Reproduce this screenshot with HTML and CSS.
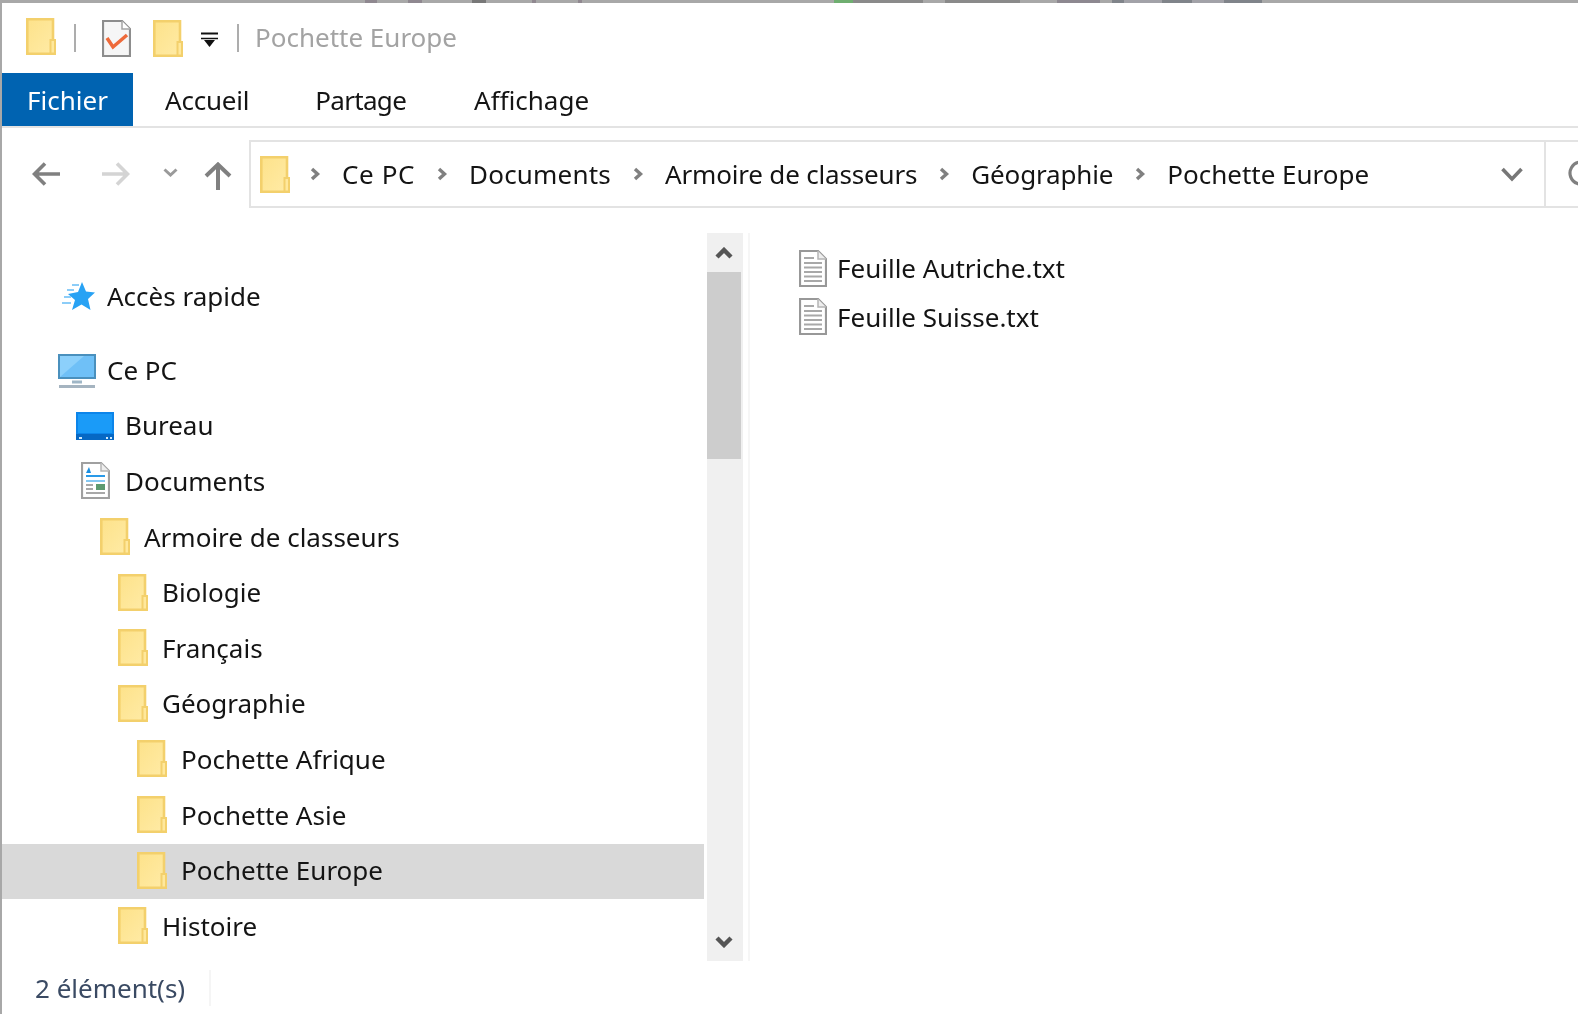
FILE: index.html
```html
<!DOCTYPE html>
<html lang="fr">
<head>
    <meta charset="UTF-8">
    <meta name="viewport" content="width=device-width, initial-scale=1.0">
    <title>Pochette Europe</title>
    <link rel="stylesheet" href="styles.css">
</head>
<body>
    <!-- icones reutilisees -->
    <svg class="defs" width="0" height="0">
        <defs>
            <linearGradient id="folder-fill" x1="0" y1="0" x2="1" y2="1">
                <stop offset="0" stop-color="#fde28a"/>
                <stop offset="1" stop-color="#ffeba6"/>
            </linearGradient>
            <symbol id="folder" viewBox="0 0 30 37">
                <path d="M1.300 1.300H27V24H28.700V35.700H1.300Z" fill="url(#folder-fill)" stroke="#f3d06c" stroke-width="2.600"/>
                <path d="M24.500 35.500V22H29V35.500Z" fill="#ffe89c" stroke="#f3d06c" stroke-width="2"/>
            </symbol>
            <symbol id="txt" viewBox="0 0 28 37">
                <path d="M1 1H19L27 9V36H1Z" fill="#fff" stroke="#989898" stroke-width="2.200"/>
                <path d="M19 1V9H27" fill="#eee" stroke="#b5b5b5" stroke-width="1.500"/>
                <path d="M5 8H15M5 13H23M5 17.500H23M5 22H23M5 26.500H23M5 31H23" stroke="#a8a8a8" stroke-width="2"/>
            </symbol>
            <symbol id="chev" viewBox="0 0 12 14">
                <path d="M3 2L8.500 7L3 12" fill="none" stroke="#808080" stroke-width="3.400"/>
            </symbol>
        </defs>
    </svg>

    <div class="window">
        <div class="edge"></div>
        <header class="qat">
            <svg class="ico-folder qat-first"><use href="#folder"/></svg>
            <span class="qat-sep"></span>
            <svg class="ico-doc" viewBox="0 0 29 37">
                <path d="M1 1H20L28 9V36H1Z" fill="#f6f6f6" stroke="#8d8d8d" stroke-width="2.200"/>
                <path d="M20 1V9H28" fill="#fff" stroke="#a5a5a5" stroke-width="1.500"/>
                <path d="M5 18L11 27L25 15" fill="none" stroke="#ee6a3a" stroke-width="3.500"/>
            </svg>
            <svg class="ico-folder qat-second"><use href="#folder"/></svg>
            <svg class="qat-drop" viewBox="0 0 17 15">
                <path d="M0 1.500H17" stroke="#111" stroke-width="2"/>
                <path d="M0 6.500H17" stroke="#111" stroke-width="1.500"/>
                <path d="M3 8H14L8.500 15Z" fill="#111"/>
            </svg>
            <span class="qat-sep sep-two"></span>
            <span class="qat-title">Pochette Europe</span>
        </header>

        <nav class="tabs">
            <a class="tab tab-file">Fichier</a>
            <a class="tab tab-home">Accueil</a>
            <a class="tab tab-share">Partage</a>
            <a class="tab">Affichage</a>
        </nav>

        <div class="navbar">
            <div class="nav-btns">
                <svg class="arrow-back" viewBox="0 0 28 24"><path d="M28 12H3M13 1.500L2.500 12L13 22.500" fill="none" stroke="#808080" stroke-width="3.600"/></svg>
                <svg class="arrow-fwd" viewBox="0 0 28 24"><path d="M0 12H25M15 1.500L25.500 12L15 22.500" fill="none" stroke="#d4d4d4" stroke-width="3.600"/></svg>
                <svg class="arrow-recent" viewBox="0 0 15 9"><path d="M1.500 1.500L7.500 7L13.500 1.500" fill="none" stroke="#9a9a9a" stroke-width="3"/></svg>
                <svg class="arrow-up" viewBox="0 0 28 28"><path d="M14 28V3M2 14L14 2.500L26 14" fill="none" stroke="#808080" stroke-width="4"/></svg>
            </div>
            <div class="address">
                <svg class="ico-folder addr-folder"><use href="#folder"/></svg>
                <svg class="crumb-sep first"><use href="#chev"/></svg>
                <span class="crumb crumb-pc">Ce PC</span>
                <svg class="crumb-sep"><use href="#chev"/></svg>
                <span class="crumb crumb-docs">Documents</span>
                <svg class="crumb-sep"><use href="#chev"/></svg>
                <span class="crumb crumb-tight">Armoire de classeurs</span>
                <svg class="crumb-sep"><use href="#chev"/></svg>
                <span class="crumb crumb-tight">Géographie</span>
                <svg class="crumb-sep"><use href="#chev"/></svg>
                <span class="crumb">Pochette Europe</span>
                <svg class="addr-drop" viewBox="0 0 22 15"><path d="M1.500 2L11 12L20.500 2" fill="none" stroke="#777" stroke-width="3.600"/></svg>
                <div class="addr-refresh">
                    <svg viewBox="0 0 30 30"><path d="M22 6A12 12 0 1 0 26 17" fill="none" stroke="#808080" stroke-width="3.400"/><path d="M16 1H25V9" fill="none" stroke="#808080" stroke-width="3"/></svg>
                </div>
            </div>
        </div>

        <main class="content">
            <aside class="pane">
                <ul class="tree">
                    <li class="row row-quick lvl0">
                        <span class="slot">
                            <svg class="ico-star" viewBox="0 0 34 30">
                                <path d="M21 1L25 10.500L34 11.500L27 18L29.500 29L20.500 23.500L11 29L14 19L7 13L17 11Z" fill="#28a2f4"/>
                                <path d="M11 4H18M6 9H13M3 16H10M1 22H10" stroke="#8ccdf8" stroke-width="2"/>
                            </svg>
                        </span>
                        Accès rapide
                    </li>
                    <li class="row lvl0">
                        <span class="slot">
                            <svg class="ico-pc" viewBox="0 0 38 34">
                                <rect x="1" y="1" width="36" height="23" fill="#6fc0f7" stroke="#4a90bd" stroke-width="2"/>
                                <path d="M2 23V2H26Z" fill="#8cd0fb"/>
                                <path d="M14 28H24" stroke="#9fb6c6" stroke-width="3"/>
                                <path d="M1 32.500H37" stroke="#a5b4c0" stroke-width="3"/>
                            </svg>
                        </span>
                        Ce PC
                    </li>
                    <li class="row lvl1">
                        <span class="slot">
                            <svg class="ico-desk" viewBox="0 0 38 28">
                                <rect x="0" y="0" width="38" height="28" fill="#0c85ea"/>
                                <path d="M2 2H36V21H2Z" fill="#1a9bf8"/>
                                <path d="M0 22H38V28H0Z" fill="#0668c4"/>
                                <path d="M3 26H6M30 26H32M34 26H36" stroke="#cfe9fb" stroke-width="2"/>
                            </svg>
                        </span>
                        Bureau
                    </li>
                    <li class="row lvl1">
                        <span class="slot">
                            <svg class="ico-docs" viewBox="0 0 29 37">
                                <path d="M1 1H20L28 9V36H1Z" fill="#fff" stroke="#a0a0a0" stroke-width="2.200"/>
                                <path d="M20 1V9H28" fill="#eee" stroke="#b5b5b5" stroke-width="1.500"/>
                                <path d="M8 5L5 11H10Z" fill="#1c8fe0"/>
                                <path d="M5 14H24" stroke="#2a9ae8" stroke-width="2"/>
                                <path d="M5 19H24" stroke="#5ab4ee" stroke-width="1.500"/>
                                <path d="M5 23H12M5 27H12M5 31H24" stroke="#a8a8a8" stroke-width="1.800"/>
                                <rect x="15" y="22" width="9" height="6" fill="#5c9a70"/>
                            </svg>
                        </span>
                        Documents
                    </li>
                    <li class="row lvl2"><span class="slot"><svg class="ico-folder"><use href="#folder"/></svg></span>Armoire de classeurs</li>
                    <li class="row lvl3"><span class="slot"><svg class="ico-folder"><use href="#folder"/></svg></span>Biologie</li>
                    <li class="row lvl3"><span class="slot"><svg class="ico-folder"><use href="#folder"/></svg></span>Français</li>
                    <li class="row lvl3"><span class="slot"><svg class="ico-folder"><use href="#folder"/></svg></span>Géographie</li>
                    <li class="row lvl4"><span class="slot"><svg class="ico-folder"><use href="#folder"/></svg></span>Pochette Afrique</li>
                    <li class="row lvl4"><span class="slot"><svg class="ico-folder"><use href="#folder"/></svg></span>Pochette Asie</li>
                    <li class="row lvl4 selected"><span class="slot"><svg class="ico-folder"><use href="#folder"/></svg></span>Pochette Europe</li>
                    <li class="row lvl3"><span class="slot"><svg class="ico-folder"><use href="#folder"/></svg></span>Histoire</li>
                </ul>
                <div class="scrollbar">
                    <svg class="sb-arrow" viewBox="0 0 18 12"><path d="M2 10L9 3L16 10" fill="none" stroke="#555" stroke-width="4.400"/></svg>
                    <div class="sb-thumb"></div>
                    <svg class="sb-arrow sb-down" viewBox="0 0 18 12"><path d="M2 2L9 9L16 2" fill="none" stroke="#555" stroke-width="4.400"/></svg>
                </div>
            </aside>
            <section class="files">
                <div class="file"><svg class="ico-txt"><use href="#txt"/></svg>Feuille Autriche.txt</div>
                <div class="file"><svg class="ico-txt"><use href="#txt"/></svg>Feuille Suisse.txt</div>
            </section>
        </main>

        <footer class="status">
            <span class="count">2 élément(s)</span>
        </footer>
    </div>
</body>
</html>
```

FILE: styles.css
```css
* {
    box-sizing: border-box;
}
html, body {
    margin: 0;
    height: 100%;
    background-color: white;
    overflow: hidden;
}
body {
    font-family: "Noto Sans", "Open Sans", sans-serif;
    font-size: 26px;
    color: #141414;
}
.defs {
    position: absolute;
}
.window {
    width: 1578px;
    height: 1014px;
    display: flex;
    flex-direction: column;
    border-left: 2px solid #a8a8a8;
    overflow: hidden;
    filter: blur(0.55px);
}
/* bord haut, avec le bas de la fenetre de derriere */
.edge {
    height: 3px;
    flex: none;
    background: linear-gradient(90deg,
        #a8a8a8 0 363px, #8f8890 363px 375px, #a8a8a8 375px 406px, #8f8890 406px 420px,
        #a8a8a8 420px 470px, #787878 470px 484px, #a8a8a8 484px 530px, #908890 530px 534px,
        #a8a8a8 534px 576px, #908890 576px 580px, #a8a8a8 580px 832px, #6fae70 832px 851px,
        #8a8a8a 851px 921px, #a8a8a8 921px 943px, #8a8a8a 943px 1018px, #a8a8a8 1018px 1055px,
        #8d8890 1055px 1098px, #a8a8a8 1098px 1110px, #80848a 1110px 1122px, #a2a2a8 1122px 1160px,
        #80848a 1160px 1190px, #a2a2a8 1190px 1222px, #80848a 1222px 1260px, #a8a8a8 1260px);
}
svg {
    display: block;
    flex: none;
}
.ico-folder {
    width: 30px;
    height: 37px;
}

/* barre d'acces rapide */
.qat {
    height: 70px;
    display: flex;
    align-items: center;
    padding-left: 24px;
    flex: none;
}
.qat-first {
    margin-top: -3px;
}
.qat-sep {
    width: 2px;
    height: 28px;
    margin-left: 18px;
    background-color: #adadad;
}
.ico-doc {
    width: 29px;
    height: 37px;
    margin-left: 26px;
}
.qat-second {
    margin-left: 22px;
}
.qat-drop {
    width: 17px;
    height: 15px;
    margin-left: 18px;
    margin-top: 3px;
}
.sep-two {
    margin-left: 19px;
}
.qat-title {
    margin-left: 16px;
    margin-top: -2px;
    color: #a3a3a3;
}

/* onglets */
.tabs {
    height: 55px;
    flex: none;
    display: flex;
    border-bottom: 2px solid #e3e3e3;
}
.tab {
    display: flex;
    align-items: center;
    margin-right: 68px;
}
.tab-file {
    width: 131px;
    height: 53px;
    justify-content: center;
    background-color: #0063b1;
    color: white;
    margin-right: 32px;
}
.tab-home {
    margin-right: 66px;
    letter-spacing: -0.2px;
}
.tab-share {
    letter-spacing: -0.7px;
    margin-right: 68px;
}

/* barre d'adresse */
.navbar {
    height: 80px;
    flex: none;
    display: flex;
    align-items: flex-start;
    padding-top: 12px;
    overflow: hidden;
}
.nav-btns {
    width: 247px;
    height: 68px;
    flex: none;
    display: flex;
    align-items: center;
    padding-left: 30px;
}
.arrow-back, .arrow-fwd {
    width: 28px;
    height: 24px;
}
.arrow-fwd {
    margin-left: 42px;
}
.arrow-recent {
    width: 15px;
    height: 9px;
    margin-left: 33px;
    margin-top: -3px;
}
.arrow-up {
    width: 28px;
    height: 28px;
    margin-left: 26px;
    margin-top: 3px;
}
.address {
    flex: 1;
    height: 68px;
    display: flex;
    align-items: center;
    border: 2px solid #e3e3e3;
    border-right: none;
    padding-left: 9px;
}
.addr-folder {
    margin-right: 19px;
}
.crumb-sep {
    width: 12px;
    height: 14px;
    margin: 0 21px 0 21px;
}
.crumb-sep.first {
    margin-left: 0;
    margin-right: 21px;
}
.crumb-pc {
    letter-spacing: 0.6px;
}
.crumb-docs {
    letter-spacing: 0.2px;
}
.crumb-tight {
    letter-spacing: -0.17px;
}
.addr-drop {
    width: 22px;
    height: 15px;
    margin-left: auto;
    margin-right: 21px;
}
.addr-refresh {
    width: 34px;
    height: 100%;
    flex: none;
    border-left: 2px solid #e3e3e3;
    padding: 17px 0 0 22px;
    overflow: hidden;
}
.addr-refresh svg {
    width: 28px;
    height: 28px;
}

/* contenu */
.content {
    flex: 1;
    display: flex;
    min-height: 0;
    padding-top: 25px;
}
.pane {
    width: 748px;
    flex: none;
    display: flex;
    border-right: 2px solid #f6f6f6;
}
.tree {
    list-style: none;
    width: 702px;
    margin: 0;
    padding: 36.5px 0 0 0;
    flex: none;
}
.row {
    height: 55.6px;
    display: flex;
    align-items: center;
    gap: 11px;
    padding-bottom: 3px;
}
.row-quick {
    margin-bottom: 18.4px;
}
.slot {
    width: 38px;
    display: flex;
    justify-content: center;
    flex: none;
}
.lvl0 { padding-left: 56px; }
.lvl1 { padding-left: 74px; }
.lvl2 { padding-left: 93px; }
.lvl3 { padding-left: 111px; }
.lvl4 { padding-left: 130px; }
.slot .ico-folder {
    margin-left: 2px;
}
.selected {
    background-color: #d9d9d9;
}
.ico-star {
    width: 34px;
    height: 30px;
    margin-left: 2px;
}
.ico-pc {
    width: 38px;
    height: 34px;
    margin-top: 3px;
}
.ico-desk {
    width: 38px;
    height: 28px;
    margin-top: 2px;
}
.ico-docs {
    width: 29px;
    height: 37px;
}

/* ascenseur */
.scrollbar {
    width: 36px;
    margin-left: 3px;
    background-color: #f0f0f0;
    display: flex;
    flex-direction: column;
    align-items: center;
}
.sb-arrow {
    width: 18px;
    height: 12px;
    margin: 14px 2px 13px 0;
}
.sb-thumb {
    width: 34px;
    height: 187px;
    margin-right: 2px;
    background-color: #cdcdcd;
}
.sb-down {
    margin-top: auto;
    margin-bottom: 13px;
}

/* fichiers */
.files {
    flex: 1;
    padding: 11px 0 0 49px;
}
.file {
    height: 48.5px;
    display: flex;
    align-items: center;
    gap: 10px;
}
.ico-txt {
    width: 28px;
    height: 37px;
}

/* barre d'etat */
.status {
    height: 53px;
    flex: none;
    display: flex;
    align-items: center;
    padding-left: 33px;
    color: #3a4a63;
}
.count {
    padding-right: 24px;
    border-right: 2px solid #f5f5f5;
}
```
